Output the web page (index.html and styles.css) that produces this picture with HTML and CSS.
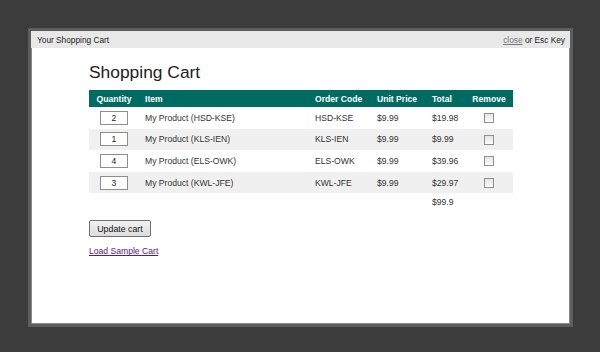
FILE: index.html
```html
<!DOCTYPE html>
<html>
<head>
<meta charset="utf-8" />
<title>Your Shopping Cart</title>
	<link rel="stylesheet" href="styles.css">
</head>

<body>
	<div class="modal">
		<div class="modal-bar">
			<span>Your Shopping Cart</span>
			<span><a href="#" class="close">close</a> or Esc Key</span>
		</div>
		<div class="modal-body">
			<h1>Shopping Cart</h1>
			<form action="#" method="get">
				<table class="cart">
					<thead>
						<tr>
							<th class="qty">Quantity</th>
							<th class="item">Item</th>
							<th class="code">Order Code</th>
							<th class="price">Unit Price</th>
							<th class="total">Total</th>
							<th class="remove">Remove</th>
						</tr>
					</thead>
					<tbody>
						<tr>
							<td class="qty"><input type="text" value="2" class="qty-box" /></td>
							<td class="item">My Product (HSD-KSE)</td>
							<td class="code">HSD-KSE</td>
							<td class="price">$9.99</td>
							<td class="total">$19.98</td>
							<td class="remove"><input type="checkbox" class="check" /></td>
						</tr>
						<tr class="alt">
							<td class="qty"><input type="text" value="1" class="qty-box" /></td>
							<td class="item">My Product (KLS-IEN)</td>
							<td class="code">KLS-IEN</td>
							<td class="price">$9.99</td>
							<td class="total">$9.99</td>
							<td class="remove"><input type="checkbox" class="check" /></td>
						</tr>
						<tr>
							<td class="qty"><input type="text" value="4" class="qty-box" /></td>
							<td class="item">My Product (ELS-OWK)</td>
							<td class="code">ELS-OWK</td>
							<td class="price">$9.99</td>
							<td class="total">$39.96</td>
							<td class="remove"><input type="checkbox" class="check" /></td>
						</tr>
						<tr class="alt">
							<td class="qty"><input type="text" value="3" class="qty-box" /></td>
							<td class="item">My Product (KWL-JFE)</td>
							<td class="code">KWL-JFE</td>
							<td class="price">$9.99</td>
							<td class="total">$29.97</td>
							<td class="remove"><input type="checkbox" class="check" /></td>
						</tr>
						<tr class="sum">
							<td></td>
							<td></td>
							<td></td>
							<td></td>
							<td class="total">$99.9</td>
							<td></td>
						</tr>
					</tbody>
				</table>
				<button type="submit" class="update">Update cart</button>
			</form>
			<a href="#" class="sample">Load Sample Cart</a>
		</div>
	</div>
</body>
</html>
```

FILE: styles.css
```css
body {
	margin: 0;
	background-color: #3c3c3c;
	font-family: "Liberation Sans", Arial, sans-serif;
	color: #333;
}
.modal {
	width: 539px;
	height: 293px;
	margin: 28px 0 0 28px;
	background-color: #fff;
	border: 3px solid #5e5e5e;
	box-shadow: inset 0 0 0 1px #8a8a8a;
}
.modal-bar {
	display: flex;
	justify-content: space-between;
	align-items: center;
	height: 17px;
	padding: 0 5px 0 6px;
	background-color: #e8e8e8;
	font-size: 8.3px;
	color: #222;
}
.close {
	color: #777;
}
.modal-body {
	padding: 0 0 0 58px;
}
h1 {
	margin: 0;
	padding: 14px 0 8px;
	font-size: 17.4px;
	font-weight: normal;
	line-height: 20px;
	color: #222;
}
.cart {
	width: 424px;
	table-layout: fixed;
	border-collapse: collapse;
	font-size: 8.6px;
}
.cart th {
	height: 17px;
	padding: 0;
	background-color: #006b63;
	color: #fff;
	font-weight: bold;
	text-align: left;
}
.cart td {
	height: 21.6px;
	padding: 0;
	text-align: left;
}
.cart tr.alt td {
	background-color: #f0f0f0;
}
.cart tr.sum td {
	height: 17px;
	vertical-align: middle;
}
.cart .qty { width: 50px; }
.cart .item { width: 170px; padding-left: 6px; }
.cart .code { width: 62px; }
.cart .price { width: 55px; }
.cart .total { width: 33px; }
.cart .remove { width: 48px; }
.cart th.qty, .cart td.qty, .cart th.remove, .cart td.remove {
	text-align: center;
}
.qty-box {
	box-sizing: border-box;
	width: 28px;
	height: 14px;
	margin: 0;
	padding: 0;
	border: 1px solid #8e8e8e;
	font-family: "Liberation Sans", Arial, sans-serif;
	font-size: 8.6px;
	color: #222;
	text-align: center;
	vertical-align: middle;
}
.check {
	-webkit-appearance: none;
	appearance: none;
	box-sizing: border-box;
	width: 10px;
	height: 10px;
	margin: 0;
	border: 1px solid #8f8f8f;
	background: linear-gradient(#e6e6e6, #fbfbfb);
	vertical-align: middle;
}
.update {
	display: block;
	box-sizing: border-box;
	width: 62px;
	height: 17px;
	margin: 10px 0 0;
	padding: 0;
	border: 1px solid #707070;
	border-radius: 2px;
	background: linear-gradient(#f2f2f2, #dcdcdc);
	font-family: "Liberation Sans", Arial, sans-serif;
	font-size: 8.8px;
	color: #111;
}
.sample {
	display: inline-block;
	margin-top: 9px;
	font-size: 8.6px;
	color: #551a8b;
}
```
